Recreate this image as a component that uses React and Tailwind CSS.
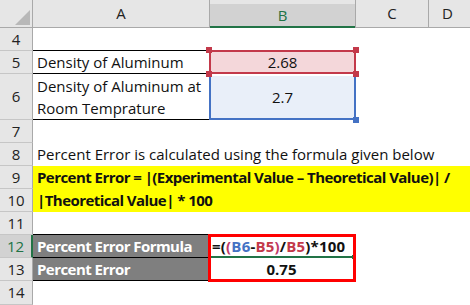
import React from "react";

const font = { fontFamily: '"Open Sans", "Liberation Sans", sans-serif' };

function RowHead({ n, sel }) {
  return (
    <div
      className={
        "w-[33px] shrink-0 flex items-center justify-center text-[15px] border-b border-[#c6c6c6] " +
        (sel
          ? "bg-[#d2d2d2] text-[#217346] border-r-2 border-r-[#217346]"
          : "bg-[#e6e6e6] text-[#222] border-r border-r-[#a9a9a9]")
      }
    >
      {n}
    </div>
  );
}

function Handle({ pos, color }) {
  return <div className={"absolute w-[6px] h-[6px] z-20 " + pos + " " + color} />;
}

export default function App() {
  return (
    <div className="w-[470px] h-[305px] overflow-hidden bg-white text-[#111] relative" style={font}>
      {/* header row */}
      <div className="flex h-[28px]">
        <div className="w-[33px] shrink-0 bg-[#e6e6e6] border-r border-b border-[#a9a9a9] relative">
          <svg className="absolute left-[15px] top-[10px]" width="15" height="15" viewBox="0 0 15 15">
            <polygon points="15,0 15,15 0,15" fill="#b8b8b8" />
          </svg>
        </div>
        <div className="w-[177px] shrink-0 bg-[#e6e6e6] border-r border-b border-[#a9a9a9] flex items-center justify-center text-[15px] text-[#222]">
          A
        </div>
        <div className="w-[145px] shrink-0 flex flex-col">
          <div className="h-[5px] bg-[#e6e6e6]" />
          <div className="flex-1 bg-[#d2d2d2] border-b-2 border-[#217346] flex items-center justify-center text-[15px] text-[#217346]">
            B
          </div>
        </div>
        <div className="w-[74px] shrink-0 bg-[#e6e6e6] border-l border-r border-b border-[#a9a9a9] flex items-center justify-center text-[15px] text-[#222]">
          C
        </div>
        <div className="flex-1 bg-[#e6e6e6] border-b border-[#a9a9a9] flex items-center pl-[13px] text-[15px] text-[#222]">
          D
        </div>
      </div>

      {/* row 4 */}
      <div className="flex h-[23px]">
        <RowHead n="4" />
        <div className="w-[177px] shrink-0 border-b border-black" />
      </div>

      {/* row 5 */}
      <div className="flex h-[23px]">
        <RowHead n="5" />
        <div className="w-[177px] shrink-0 border-b border-black flex items-center pl-[4px] text-[15px] whitespace-nowrap">
          Density of Aluminum
        </div>
        <div className="w-[145px] shrink-0 relative">
          <div className="absolute left-[-1px] top-[-1px] right-[-1px] bottom-[0px] bg-[#f4d7da] border-2 border-[#c3394a] flex items-center justify-center text-[15px] z-10">
            2.68
          </div>
          <Handle pos="left-[-4px] top-[-4px]" color="bg-[#c3394a]" />
          <Handle pos="right-[-4px] top-[-4px]" color="bg-[#c3394a]" />
          <Handle pos="left-[-4px] bottom-[-3px]" color="bg-[#c3394a]" />
          <Handle pos="right-[-4px] bottom-[-3px]" color="bg-[#c3394a]" />
        </div>
      </div>

      {/* row 6 */}
      <div className="flex h-[46px]">
        <RowHead n="6" />
        <div className="w-[177px] shrink-0 border-b border-black flex flex-col justify-center pl-[4px] text-[15px] leading-[22px] whitespace-nowrap">
          <span>Density of Aluminum at</span>
          <span>Room Temprature</span>
        </div>
        <div className="w-[145px] shrink-0 relative">
          <div className="absolute left-[-1px] top-[2px] right-[-1px] bottom-[0px] bg-[#e9eff9] border-2 border-t-0 border-[#4472c4] flex items-center justify-center text-[15px]">
            2.7
          </div>
          <Handle pos="right-[-4px] bottom-[-3px]" color="bg-[#4472c4]" />
        </div>
      </div>

      {/* row 7 */}
      <div className="flex h-[23px]">
        <RowHead n="7" />
      </div>

      {/* row 8 */}
      <div className="flex h-[23px]">
        <RowHead n="8" />
        <div className="flex items-center pl-[4px] text-[15px] whitespace-nowrap">
          Percent Error is calculated using the formula given below
        </div>
      </div>

      {/* row 9 */}
      <div className="flex h-[23px]">
        <RowHead n="9" />
        <div className="flex-1 bg-[#ffff00] flex items-center pl-[4px] text-[15px] font-bold tracking-[-0.55px] whitespace-nowrap">
          Percent Error = |(Experimental Value – Theoretical Value)| /
        </div>
      </div>

      {/* row 10 */}
      <div className="flex h-[23px]">
        <RowHead n="10" />
        <div className="flex-1 bg-[#ffff00] flex items-center pl-[4px] text-[15px] font-bold tracking-[-0.55px] whitespace-nowrap">
          |Theoretical Value| * 100
        </div>
      </div>

      {/* row 11 */}
      <div className="flex h-[23px]">
        <RowHead n="11" />
        <div className="w-[177px] shrink-0 border-b border-black" />
      </div>

      {/* row 12 */}
      <div className="flex h-[23px]">
        <RowHead n="12" sel />
        <div className="w-[176px] shrink-0 bg-[#7f7f7f] border-b border-black flex items-center pl-[4px] text-[15px] font-bold tracking-[-0.55px] text-white whitespace-nowrap">
          Percent Error Formula
        </div>
        <div className="w-[145px] shrink-0 relative">
          <div className="absolute left-[-1px] top-[-1px] right-[-2px] h-[48px] border-[3px] border-[#ff0000] z-20" />
          <div className="absolute left-[0px] right-[0px] bottom-[0px] h-[2px] bg-[#217346]" />
          <div className="absolute right-[-2px] bottom-[-1px] w-[4px] h-[4px] bg-[#217346]" />
          <div className="flex items-center h-full pl-[3px] text-[15px] font-bold tracking-[0.2px] whitespace-nowrap">
            <span>=(</span>
            <span className="text-[#c03a6a]">(</span>
            <span className="text-[#4472c4]">B6</span>
            <span>-</span>
            <span className="text-[#c3394a]">B5</span>
            <span className="text-[#c03a6a]">)</span>
            <span>/</span>
            <span className="text-[#c3394a]">B5</span>
            <span>)*100</span>
          </div>
        </div>
      </div>

      {/* row 13 */}
      <div className="flex h-[23px]">
        <RowHead n="13" />
        <div className="w-[176px] shrink-0 bg-[#7f7f7f] border-b border-black flex items-center pl-[4px] text-[15px] font-bold tracking-[-0.55px] text-white whitespace-nowrap">
          Percent Error
        </div>
        <div className="w-[145px] shrink-0 flex items-center justify-center text-[15px] font-bold">
          0.75
        </div>
      </div>

      {/* row 14 */}
      <div className="flex h-[24px]">
        <RowHead n="14" />
      </div>
    </div>
  );
}
